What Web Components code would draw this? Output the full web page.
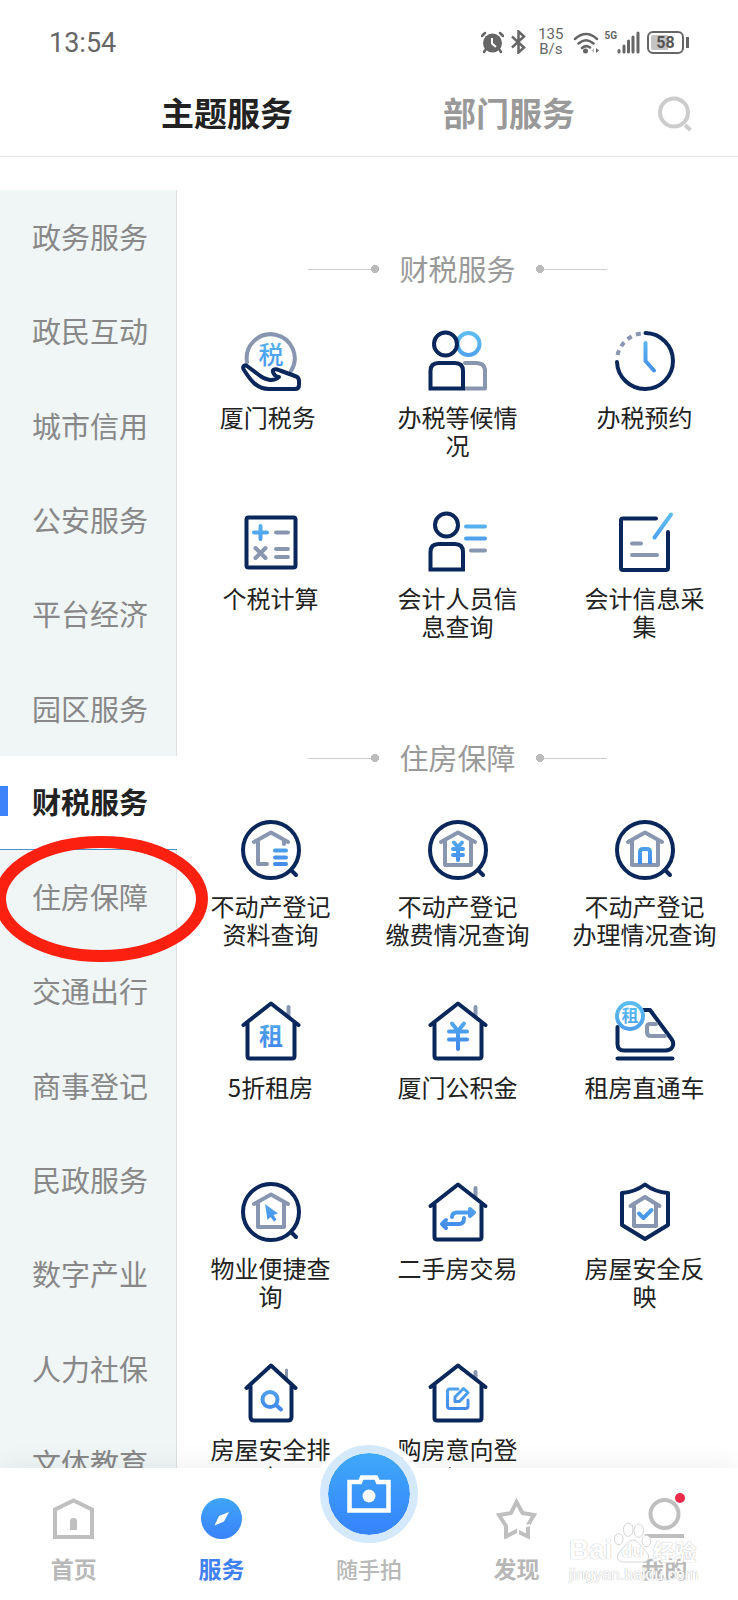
<!DOCTYPE html>
<html lang="zh-CN">
<head>
<meta charset="utf-8">
<meta name="viewport" content="width=device-width, initial-scale=1">
<title>主题服务</title>
<style>
  html, body { margin: 0; height: 100%; background: #fff; }
  body { font-family: "Noto Sans CJK SC", sans-serif; color: #222; }
</style>
</head>
<body>
<service-app>
  <status-bar slot="top"></status-bar>
  <page-tabs slot="top"></page-tabs>
  <side-menu slot="side">
    <side-item>政务服务</side-item>
    <side-item>政民互动</side-item>
    <side-item>城市信用</side-item>
    <side-item>公安服务</side-item>
    <side-item>平台经济</side-item>
    <side-item>园区服务</side-item>
    <side-item active>财税服务</side-item>
    <side-item marked>住房保障</side-item>
    <side-item>交通出行</side-item>
    <side-item>商事登记</side-item>
    <side-item>民政服务</side-item>
    <side-item>数字产业</side-item>
    <side-item>人力社保</side-item>
    <side-item>文体教育</side-item>
  </side-menu>
  <service-section heading="财税服务">
    <service-tile icon="tax">厦门税务&nbsp;</service-tile>
    <service-tile icon="people">办税等候情<br>况</service-tile>
    <service-tile icon="clock">办税预约</service-tile>
    <service-tile icon="calc">个税计算</service-tile>
    <service-tile icon="person">会计人员信<br>息查询</service-tile>
    <service-tile icon="form">会计信息采<br>集</service-tile>
  </service-section>
  <service-section heading="住房保障">
    <service-tile icon="find-list">不动产登记<br>资料查询</service-tile>
    <service-tile icon="find-yen">不动产登记<br>缴费情况查询</service-tile>
    <service-tile icon="find-door">不动产登记<br>办理情况查询</service-tile>
    <service-tile icon="rent">5折租房</service-tile>
    <service-tile icon="fund">厦门公积金</service-tile>
    <service-tile icon="train">租房直通车</service-tile>
    <service-tile icon="find-cursor">物业便捷查<br>询</service-tile>
    <service-tile icon="trade">二手房交易</service-tile>
    <service-tile icon="shield">房屋安全反<br>映</service-tile>
    <service-tile icon="inspect">房屋安全排<br>查</service-tile>
    <service-tile icon="intent">购房意向登<br>记</service-tile>
  </service-section>
  <tab-bar slot="bottom">
    <tab-item icon="home">首页</tab-item>
    <tab-item icon="compass" active>服务</tab-item>
    <camera-item>随手拍</camera-item>
    <tab-item icon="star">发现</tab-item>
    <tab-item icon="me" dot>我的</tab-item>
  </tab-bar>
  <water-mark slot="bottom"></water-mark>
</service-app>

<script>
const define = (name, html, setup) => {
  const tpl = document.createElement('template');
  tpl.innerHTML = html;
  customElements.define(name, class extends HTMLElement {
    connectedCallback() {
      if (this.shadowRoot) return;
      this.attachShadow({ mode: 'open' }).append(tpl.content.cloneNode(true));
      if (setup) setup(this, this.shadowRoot);
    }
  });
};

const house = (chimney = 'M47.5 6V16') => `<path class="g" d="${chimney}"/><path class="n" d="M2.5 24 30 2.5 57.5 24M6.5 22V55q0 2.5 2.5 2.5H51q2.5 0 2.5-2.5V22"/>`;
const lens = '<circle class="n" cx="30" cy="30" r="28"/><path class="n" d="M50 50 55 55"/>';
const hut = '<path class="g" d="M13 22 30 12.5 47 22M17 21V45H43V21"/>';

const ICONS = {
  tax: `<path class="g" d="M6 31A24 24 0 1 1 50 40"/><text x="30" y="33" font-size="25" font-weight="500">税</text>
    <path class="n" fill="#fff" d="M6 35C3 33 1 36 3 39 10 50 16 58 28 58H54Q58 58 58 54V50Q58 46 54 45L39 39.5C33 37 30 39 33 43 34 45 37 46 38 46 32 51 24 49 18 44Z"/>`,
  people: `<circle class="b" cx="40.5" cy="13" r="11"/><path class="g" d="M37 32H48q9 0 9 8V57.5H37"/>
    <circle class="n" cx="17.5" cy="13" r="11.5"/><path class="n sq" fill="#fff" d="M2.5 57.5V40q0-8 8-8H27q8 0 8 8V57.5Z"/>`,
  clock: `<path class="n" d="M30.5 2A28 28 0 1 1 2 31"/><path class="g" style="stroke-linecap:butt" stroke-dasharray="5 4.5" d="M2.5 24A28 28 0 0 1 26 2.5"/><path class="b" d="M30.5 12V30L39 39.5"/>`,
  calc: `<rect class="n" x="5.5" y="5.5" width="49" height="50" rx="2"/><path class="b" d="M19.5 14V27M13 20.5H26"/><path class="g" d="M35 20.5H47M35 37H47M35 45H47M14.5 36 24.5 46M24.5 36 14.5 46"/>`,
  person: `<circle class="n" cx="18.5" cy="13" r="11.5"/><path class="n sq" d="M2.5 57.5V40q0-8 8-8H27q8 0 8 8V57.5Z"/><path class="b" d="M38 14.5H57M38 26.5H57"/><path class="g" d="M43 38.5H57"/>`,
  form: `<path class="n" d="M41 6.5H8q-2 0-2 2V56q0 2 2 2H51q2 0 2-2V20"/><path class="b" d="M56 2.5 39.5 25.5"/><path class="g" d="M17 31.5H26M17 43H42"/>`,
  'find-list': lens + `<path class="g" d="M13 22 30 12.5 47 22M17 21V44H26M43 20V24"/><path class="b" d="M34 30.5H45M34 37.5H45M34 44H45"/>`,
  'find-yen': lens + hut + `<path class="b" d="M26 22.5 30 27 34 22.5M25 29H35M25 35H35M30 28V40"/>`,
  'find-door': lens + hut + `<path class="b sq" d="M25 44V32q0-3 3-3H32q3 0 3 3V44"/>`,
  'find-cursor': lens + hut + `<path fill="url(#u)" d="M24 22 37 31.5 32.5 33 35.5 37.5 33 39.5 29.5 35 26.5 38Z"/>`,
  rent: house() + `<text x="30" y="44" font-size="24" font-weight="700">租</text>`,
  fund: house() + `<path class="b" d="M24 22.5 30 30 36 22.5M21 30.5H39M21 38.5H39M30 31V48"/>`,
  train: `<path class="n" d="M2.5 26V43q0 6.5 6.5 6.5H50C58 49.5 60 43 56.5 38L35 9H28"/><path class="g" d="M41 23H35q-3 0-3 3V31q0 4 4 4H50"/>
    <circle cx="15" cy="15" r="13" fill="#fff"/><circle class="b" cx="15" cy="15" r="13"/><path class="n" d="M2.5 57.5H57.5"/><text x="15" y="21" font-size="17" font-weight="700">租</text>`,
  trade: house() + `<path class="b" d="M24 35Q24 30.5 29 30.5H44M36 36Q36 42 31 42H15M18 38 14 42 18 46"/><path class="b" fill="url(#u)" d="M42 27 46 30.5 42 34Z"/>`,
  shield: `<path class="n" d="M30 2.5Q40 10 53 11V43L30 57 7 43V11Q20 10 30 2.5Z"/><path class="g" d="M15.5 24 30 15 44.5 24M19 23V44H41V23"/><path class="b" d="M24 31.5 28.5 36 36.5 28"/>`,
  inspect: `<path class="g thin" d="M45.5 7V15"/><path class="n" d="M5.5 25 30 2.5 54.5 25M9.5 23V54q0 3.5 3.5 3.5H47q3.5 0 3.5-3.5V23"/><circle class="b" cx="29" cy="36.5" r="7.5"/><path class="b" d="M35 42 40 46.5"/>`,
  intent: house('M47.5 9V16') + `<path class="b thin" d="M30 26H22q-2.5 0-2.5 2.5V43q0 2.5 2.5 2.5H37.5q2.5 0 2.5-2.5V37M27 38.5V34L35.5 25.5 40 29.5 31.5 38.5Z"/>`,
  home: `<path d="M2 11.5 20.5 2.5 39 11.5V39H2Z" fill="none" stroke="#bfbfbf" stroke-width="4"/><path d="M17 32V23q0-3 3.500-3t3.500 3V32Z" fill="#bfbfbf"/>`,
  compass: `<defs><linearGradient id="c" x2="0" y2="1"><stop stop-color="#3fa5f8"/><stop offset="1" stop-color="#3a82fb"/></linearGradient></defs><circle cx="20.5" cy="20.5" r="20.5" fill="url(#c)"/><path d="M28 14 23 23.5 13.5 27.5 18 18Z" fill="#fff"/>`,
  star: `<path d="M32 28V38.5L20.5 33 10 38.5V28L3 17 15 15 20.5 4 26.5 15 38 17 32 27" fill="none" stroke="#bfbfbf" stroke-width="4"/><path d="M27 29 34 27M22 31V38" stroke="#fff" stroke-width="2"/>`,
  me: `<circle cx="20.5" cy="16" r="14" fill="none" stroke="#bfbfbf" stroke-width="4"/><path d="M1 38H40" stroke="#bfbfbf" stroke-width="4"/>`
};

define('service-icon', `
<style>
  :host { display: block; width: 60px; height: 60px; }
  svg { display: block; width: 100%; height: 100%; overflow: visible; }
  .n, .g, .b { fill: none; stroke-width: 4; stroke-linecap: round; stroke-linejoin: round; }
  .n { stroke: #09275a; }
  .n[fill] { fill: #fff; }
  .g { stroke: #8896b0; }
  .b { stroke: url(#u); }
  .b[fill] { fill: url(#u); }
  .sq { stroke-linecap: butt; stroke-linejoin: miter; }
  .thin { stroke-width: 3; }
  text { fill: url(#u); text-anchor: middle; font-family: "Noto Sans CJK SC", sans-serif; }
</style>
<svg viewBox="0 0 60 60" aria-hidden="true"></svg>`, (el, root) => {
  root.querySelector('svg').innerHTML =
    '<defs><linearGradient id="u" gradientUnits="userSpaceOnUse" x1="0" y1="4" x2="0" y2="52"><stop stop-color="#5cbcf0"/><stop offset="1" stop-color="#3f83ea"/></linearGradient></defs>' +
    ICONS[el.getAttribute('name')];
});

define('status-bar', `
<style>
  :host { display: flex; align-items: center; height: 84px; padding: 0 49px; color: #666; font-family: Roboto, sans-serif; }
  time { font-size: 27px; line-height: 32px; margin-right: auto; padding-top: 2px; }
  svg { display: block; }
  .bt { margin-left: 4px; }
  .rate { font-size: 15px; line-height: 15px; margin: 0 10px; text-align: center; }
  .net { font-size: 10px; line-height: 12px; font-weight: 700; align-self: flex-start; margin: 30px 0 0 4px; }
  .battery { display: flex; align-items: center; margin-left: 7px; }
  .cell { box-sizing: border-box; width: 37px; height: 23px; border: 2px solid #666; border-radius: 6px; padding: 2px; }
  .cell b { display: block; font-size: 16px; line-height: 15px; text-align: center; border-radius: 2px; background: linear-gradient(90deg, #c4c4c4 58%, transparent 58%); color: #555; }
  .nub { width: 3px; height: 11px; margin-left: 2px; background: #666; }
</style>
<time>13:54</time>
<svg width="23" height="23" viewBox="0 0 23 23"><circle cx="11.5" cy="12" r="9.5" fill="#666"/><path d="M5 18 3 21M18 18 20 21M1 5 4 2M22 5 19 2" stroke="#666" stroke-width="2.5" stroke-linecap="round"/><path d="M11 7V12.5L15 16" fill="none" stroke="#fff" stroke-width="2"/></svg>
<svg class="bt" width="20" height="24" viewBox="0 0 20 24"><path d="M4 6.5 16 17.5 10.5 22.5V1.5L16 6.5 4 17.5" fill="none" stroke="#666" stroke-width="2.5"/></svg>
<div class="rate">135<br>B/s</div>
<svg width="27" height="23" viewBox="0 0 27 23"><path d="M2 8Q13 -2 24 8M5.5 12.5Q13 6 20.5 12.5M9 17Q13 13.5 17 16.5" fill="none" stroke="#666" stroke-width="2.5" stroke-linecap="round"/><circle cx="12.5" cy="20" r="2.5" fill="#666"/><path d="M21 17V22L18.5 19.5Z" fill="#bbb"/><path d="M23 17V22L26 19.5Z" fill="#666"/></svg>
<span class="net">5G</span>
<svg width="23" height="23" viewBox="0 0 23 23"><path d="M2 19.500V21M7 15V21M11.500 10V21M16 6V21M21 2V21" stroke="#666" stroke-width="3" stroke-linecap="round"/></svg>
<div class="battery"><div class="cell"><b>58</b></div><div class="nub"></div></div>`);

define('page-tabs', `
<style>
  :host { display: flex; align-items: center; height: 72px; padding: 0 38px 0 86px; border-bottom: 1px solid #e6e6e6; }
  button { border: 0; padding: 0; background: none; font: inherit; }
  .tabs { flex: 1; display: flex; }
  .tabs button { flex: 1; font-size: 33px; line-height: 48px; font-weight: 700; color: #999; padding-bottom: 16px; }
  .tabs [aria-selected=true] { color: #222; }
  .search { width: 50px; display: flex; justify-content: center; padding-bottom: 12px; }
</style>
<div class="tabs" role="tablist"><button role="tab" aria-selected="true">主题服务</button><button role="tab" aria-selected="false">部门服务</button></div>
<button class="search" aria-label="搜索"><svg width="36" height="36" viewBox="0 0 36 36" fill="none"><circle cx="17" cy="16.5" r="14" stroke="#ccc" stroke-width="4"/><path d="M28 29 33.5 34" stroke="#ccc" stroke-width="4"/></svg></button>`);

define('side-menu', `
<style>
  :host { display: block; }
  nav { display: grid; grid-auto-rows: 1fr; height: 1320px; }
</style>
<nav aria-label="服务分类"><slot></slot></nav>`);

define('side-item', `
<style>
  :host { display: grid; position: relative; box-sizing: border-box; background: #f0f5f6; border-right: 1px solid #dce1e2; }
  a { display: flex; align-items: center; padding: 0 0 2px 32px; color: #888; font-size: 29px; line-height: 44px; text-decoration: none; white-space: nowrap; }
  :host([active]) { background: #fff; border-right: 0; border-bottom: 1px solid #4a90c8; }
  :host([active]) a { color: #222; font-weight: 700; padding-left: 0; }
  :host([active]) a::before { content: ""; width: 8px; height: 30px; margin-right: 24px; background: #3f83fa; }
  svg { display: none; position: absolute; left: -7px; top: -15px; z-index: 2; pointer-events: none; }
  :host([marked]) svg { display: block; }
</style>
<a href="#"><slot></slot></a>
<svg width="216" height="128" viewBox="0 0 216 128" aria-hidden="true"><ellipse cx="108" cy="64" rx="101" ry="57" fill="none" stroke="#fc2010" stroke-width="12"/></svg>`);

define('service-section', `
<style>
  :host { display: block; padding-bottom: 97px; }
  header { display: flex; align-items: center; justify-content: center; gap: 20px; }
  h2 { margin: 0; font-size: 29px; line-height: 40px; padding-bottom: 2px; font-weight: 400; color: #999; }
  i { width: 71px; height: 8px; background: radial-gradient(circle at 4px 4px, #bbb 4px, transparent 4px), linear-gradient(#ccc, #ccc) 0 4px / 100% 1px no-repeat; }
  i:first-child { transform: scaleX(-1); }
  .grid { display: grid; grid-template-columns: repeat(3, 1fr); row-gap: 53px; margin-top: 41px; }
</style>
<header><i></i><h2></h2><i></i></header>
<div class="grid"><slot></slot></div>`, (el, root) => {
  root.querySelector('h2').textContent = el.getAttribute('heading');
});

define('service-tile', `
<style>
  :host { display: block; }
  a { display: flex; flex-direction: column; align-items: center; gap: 12px; color: #222; text-decoration: none; }
  span { min-height: 56px; font-size: 24px; line-height: 28px; text-align: center; white-space: nowrap; }
</style>
<a href="#"><service-icon></service-icon><span><slot></slot></span></a>`, (el, root) => {
  const icon = document.createElement('service-icon');
  icon.setAttribute('name', el.getAttribute('icon'));
  root.querySelector('service-icon').replaceWith(icon);
});

define('tab-bar', `
<style>
  :host { display: block; background: #fff; box-shadow: 0 -4px 24px rgba(0, 0, 0, .06); }
  nav { display: grid; grid-template-columns: repeat(5, 1fr); height: 132px; }
</style>
<nav aria-label="主导航"><slot></slot></nav>`);

define('tab-item', `
<style>
  :host { display: block; }
  a { display: flex; flex-direction: column; align-items: center; gap: 12px; padding-top: 30px; color: #b8b8b8; font-size: 23px; line-height: 34px; font-weight: 700; text-decoration: none; }
  .pic { position: relative; width: 41px; height: 41px; }
  svg { display: block; }
  .dot { display: none; position: absolute; right: 0; top: -5px; width: 10px; height: 10px; border-radius: 50%; background: #ee2c4a; }
  :host([active]) a { color: #4080f0; }
  :host([dot]) .dot { display: block; }
</style>
<a href="#"><span class="pic"><svg width="41" height="41" viewBox="0 0 41 41" aria-hidden="true"></svg><span class="dot"></span></span><span><slot></slot></span></a>`, (el, root) => {
  root.querySelector('svg').innerHTML = ICONS[el.getAttribute('icon')];
});

define('camera-item', `
<style>
  :host { display: block; }
  button { width: 100%; padding: 0; border: 0; background: none; display: flex; flex-direction: column; align-items: center; gap: 10px; margin-top: -23px; font: inherit; font-size: 22px; line-height: 30px; font-weight: 500; color: #b8b8b8; }
  .disc { box-sizing: border-box; width: 98px; height: 98px; border: 8px solid #d5e9fc; border-radius: 50%; background: linear-gradient(#3fa9f9, #3583fc) padding-box; box-shadow: 0 0 0 6px #fff; display: grid; place-items: center; }
</style>
<button><span class="disc"><svg width="44" height="38" viewBox="0 0 44 38" aria-hidden="true"><path d="M2.5 7H13L15 2.5H29L31 7H41.5V35.5H2.5Z" fill="none" stroke="#fff" stroke-width="4.5"/><circle cx="22" cy="21" r="6.5" fill="#fff"/></svg></span><span><slot></slot></span></button>`);

define('water-mark', `
<style>
  :host { display: block; position: absolute; right: 40px; bottom: 14px; pointer-events: none; color: #fff; text-shadow: 0 0 1px #bbb, 0 0 1px #ccc; }
  .brand { display: flex; align-items: flex-end; font: 700 28px/28px "Liberation Sans", sans-serif; }
  .paw { position: relative; display: grid; place-items: end center; width: 40px; height: 44px; font-size: 19px; line-height: 26px; }
  .paw svg { position: absolute; left: 0; top: 2px; }
  .paw span { position: relative; }
  .cn { font: 700 22px/28px "Noto Sans CJK SC", sans-serif; }
  .site { font: 16px/22px "Liberation Sans", sans-serif; }
</style>
<div class="brand"><span>Bai</span><span class="paw"><svg width="40" height="42" viewBox="0 0 42 44" fill="#fff" stroke="#d4d4d4"><ellipse cx="6" cy="18" rx="4.5" ry="6"/><ellipse cx="16" cy="8" rx="5" ry="7"/><ellipse cx="27" cy="9" rx="5" ry="7"/><ellipse cx="35" cy="20" rx="4.5" ry="6"/><path d="M21 19C15 19 14 25 9 29 2 35 4 42 11 42H31C38 42 40 35 33 29 28 25 27 19 21 19Z"/></svg><span>du</span></span><span class="cn">经验</span></div>
<div class="site">jingyan.baidu.com</div>`);

define('service-app', `
<style>
  :host { display: flex; flex-direction: column; position: relative; height: 100vh; overflow: hidden; }
  .body { flex: 1; min-height: 0; overflow: hidden; display: grid; grid-template-columns: 177px 1fr; align-items: start; margin-top: 33px; }
  .side { position: relative; z-index: 1; }
  main { padding-top: 58px; }
  footer { position: relative; z-index: 3; }
</style>
<div><slot name="top"></slot></div>
<div class="body"><div class="side"><slot name="side"></slot></div><main><slot></slot></main></div>
<footer><slot name="bottom"></slot></footer>`);
</script>
</body>
</html>
